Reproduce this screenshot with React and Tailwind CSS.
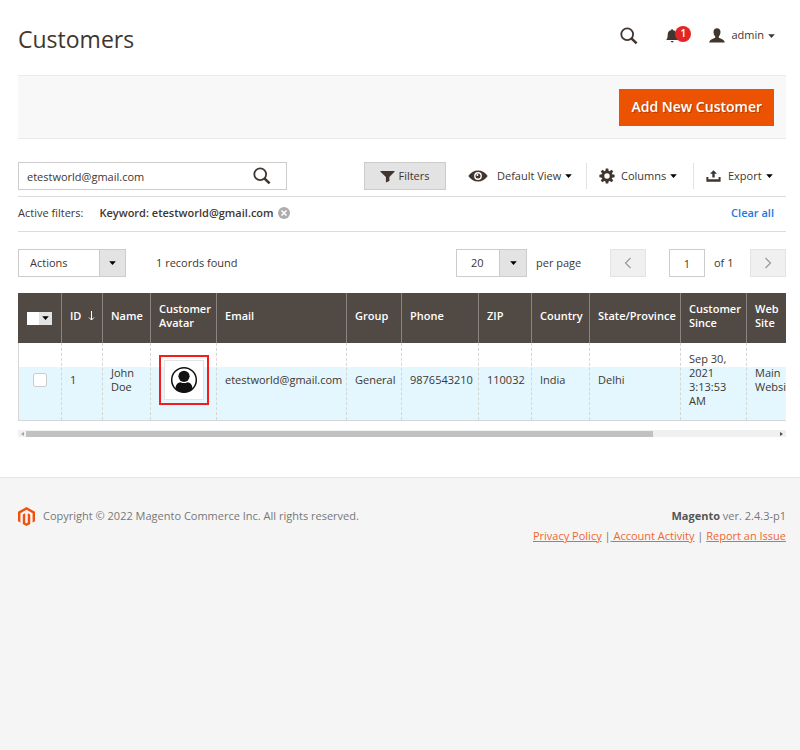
import React from "react";

function Caret({ className = "" }) {
  return (
    <svg className={`shrink-0 ${className}`} width="7" height="4" viewBox="0 0 7 4" aria-hidden="true">
      <path d="M0.200 0.200h6.600L3.500 4z" fill="currentColor" />
    </svg>
  );
}

function SearchIcon({ size }) {
  return (
    <svg width={size} height={size} viewBox="0 0 18 18" fill="none" stroke="#41362f" aria-hidden="true">
      <circle cx="7.2" cy="7.2" r="5.9" strokeWidth="1.8" />
      <path d="M11.4 11.4l5.2 5" strokeWidth="2.6" />
    </svg>
  );
}

function BellIcon() {
  return (
    <svg width="13" height="14" viewBox="0 0 13 14" fill="#41362f" aria-hidden="true">
      <path d="M6 0.3c.7 0 1.100.4 1.100 1 2.400.5 3.400 2.100 3.500 4.100.1 2.600.6 4.200 2.300 5.700H.1c1.500-1.500 1.500-3.100 1.600-5.700C1.800 3.400 2.600 1.800 5 1.300c0-.6.4-1 1-1z" />
      <path d="M4.700 12h3c-.2.9-.8 1.400-1.500 1.400S4.900 12.900 4.700 12z" />
    </svg>
  );
}

function UserIcon() {
  return (
    <svg width="16" height="15" viewBox="0 0 16 15" fill="#41362f" aria-hidden="true">
      <path d="M8 0.300c2.200 0 3.500 1.500 3.500 3.800 0 1.700-.7 3.400-1.700 4.300v1.300c1 .8 5.800 1.500 6 4.800H.2c.2-3.300 5-4 6-4.800V8.400C5.200 7.500 4.500 5.800 4.500 4.100 4.500 1.800 5.800.3 8 .3z" />
    </svg>
  );
}

function FunnelIcon() {
  return (
    <svg width="15" height="13" viewBox="0 0 16 13" fill="#41362f" aria-hidden="true">
      <path d="M0.500 0.500h15v.8L10 7v4.200L6.300 13V7L.5 1.300z" />
    </svg>
  );
}

function EyeIcon() {
  return (
    <svg width="20" height="12" viewBox="0 0 20 12" aria-hidden="true">
      <path d="M0.300 6C2.600 2.500 6 .5 10 .5S17.400 2.500 19.700 6C17.400 9.500 14 11.500 10 11.500S2.600 9.500.3 6z" fill="#41362f" />
      <circle cx="10" cy="6" r="3.900" fill="#fff" />
      <circle cx="10" cy="6" r="2.500" fill="#41362f" />
      <circle cx="9.400" cy="5" r="1" fill="#fff" />
    </svg>
  );
}

function GearIcon() {
  const teeth = [0, 45, 90, 135, 180, 225, 270, 315];
  return (
    <svg width="16" height="16" viewBox="0 0 16 16" aria-hidden="true">
      {teeth.map((angle) => (
        <path key={angle} d="M6.300 3.200L6.800.4h2.400l.5 2.800z" fill="#41362f" transform={`rotate(${angle} 8 8)`} />
      ))}
      <circle cx="8" cy="8" r="4.100" fill="none" stroke="#41362f" strokeWidth="2.800" />
    </svg>
  );
}

function ExportIcon() {
  return (
    <svg width="15" height="12" viewBox="0 0 15 12" fill="#41362f" aria-hidden="true">
      <path d="M7.500 0.200l3.500 3.600H8.700v3.700H6.300V3.800H4z" />
      <path d="M0.400 7h2v2.300h10.200V7h2v4.700H.4z" />
    </svg>
  );
}

function AvatarIcon() {
  return (
    <svg width="28" height="28" viewBox="0 0 28 28" aria-label="Customer avatar" role="img">
      <defs>
        <clipPath id="avatar-ring">
          <circle cx="14" cy="14" r="12.500" />
        </clipPath>
      </defs>
      <circle cx="14" cy="14" r="12.300" fill="#fff" stroke="#111" strokeWidth="1.500" />
      <circle cx="14" cy="10.300" r="5.600" fill="#111" />
      <path d="M5.500 28v-5.500c0-3.500 2.400-6.300 5.200-6.300 1 .6 2.100.9 3.300.9s2.300-.3 3.300-.9c2.800 0 5.200 2.800 5.200 6.300V28z" fill="#111" clipPath="url(#avatar-ring)" />
    </svg>
  );
}

function MagentoLogo() {
  return (
    <svg width="17" height="19" viewBox="0 0 17 19" aria-label="Magento" role="img" fill="#f1500d">
      <path d="M8.500 0L17 4.800v9.500l-2.400 1.300V6.200L8.500 2.700 2.400 6.200v9.400L0 14.300V4.800z" />
      <path d="M4.800 7.500l2.400-1.200v9.300l1.300.8 1.300-.8V6.300l2.400 1.200v9.400L8.500 19l-3.700-2.100z" />
    </svg>
  );
}

function Picker({ label, value, className, textClass, arrowClass }) {
  return (
    <div className={`relative h-7 border border-[#ccc] bg-white ${className}`}>
      <select aria-label={label} defaultValue={value} className={`block h-full w-full appearance-none bg-transparent text-[#41362f] outline-none ${textClass}`}>
        <option>{value}</option>
      </select>
      <span className={`pointer-events-none absolute inset-y-0 right-0 flex items-center justify-center border-l border-[#ccc] bg-[#e3e3e3] text-black ${arrowClass}`}>
        <Caret />
      </span>
    </div>
  );
}

function PageButton({ label, path }) {
  return (
    <button type="button" aria-label={label} className="flex h-7 w-9 items-center justify-center border border-[#e3e3e3] bg-[#f0f0f0]">
      <svg width="8" height="12" viewBox="0 0 8 12" fill="none" stroke="#999" strokeWidth="1.200" aria-hidden="true">
        <path d={path} />
      </svg>
    </button>
  );
}

const columns = [
  { title: "Name", value: "John Doe", width: "w-12" },
  { title: "Customer Avatar", avatar: true, width: "w-[66px]" },
  { title: "Email", value: "etestworld@gmail.com", width: "w-[130px]" },
  { title: "Group", value: "General", width: "w-[55px]" },
  { title: "Phone", value: "9876543210", width: "w-[77px]" },
  { title: "ZIP", value: "110032", width: "w-[53px]" },
  { title: "Country", value: "India", width: "w-[58px]" },
  { title: "State/Province", value: "Delhi", width: "w-[91px]" },
  { title: "Customer Since", value: "Sep 30, 2021 3:13:53 AM", width: "w-[66px]" },
  { title: "Web Site", value: "Main Website", width: "w-[58px]" },
];

function CustomerTable() {
  const head = "border-l border-[#8a837f] px-2 pb-1 text-left font-semibold";
  const cell = "border-l border-dashed border-[#d6d6d6] px-2 pb-1";
  return (
    <div className="mt-4">
      <div className="overflow-hidden border-b border-[#d6d6d6]">
        <table className="w-[745px] min-w-full table-fixed border-separate border-spacing-0 text-[11px] leading-[14px]">
          <colgroup>
            <col className="w-[43px]" />
            <col className="w-[41px]" />
            {columns.map((c) => (
              <col key={c.title} className={c.width} />
            ))}
          </colgroup>
          <thead>
            <tr className="h-[50px] bg-[#514943] text-white">
              <th className="border-l border-[#514943] pl-2 text-left">
                <button type="button" aria-label="Select rows" className="flex h-[13px] w-[25px] bg-white">
                  <span className="ml-auto flex h-full w-[13px] items-center justify-center bg-[#e3e3e3] text-black">
                    <Caret />
                  </span>
                </button>
              </th>
              <th className={head}>
                <span className="flex items-center gap-[7px] whitespace-nowrap">
                  ID
                  <svg className="shrink-0" width="7" height="10" viewBox="0 0 7 10" fill="none" stroke="#fff" aria-hidden="true">
                    <path d="M3.500 0v9M1 6.500l2.500 2.500L6 6.500" />
                  </svg>
                </span>
              </th>
              {columns.map((c) => (
                <th key={c.title} className={head}>{c.title}</th>
              ))}
            </tr>
          </thead>
          <tbody>
            <tr className="h-[77px] bg-linear-to-b from-white from-[24px] to-[#e4f6fe] to-[24px] text-[#41362f]">
              <td className="border-l border-[#d6d6d6] pb-1 pl-[14px]">
                <input type="checkbox" aria-label="Select John Doe" className="block size-[14px] appearance-none rounded-xs border border-[#ccc] bg-white" />
              </td>
              <td className={cell}>1</td>
              {columns.map((c) => (
                <td key={c.title} className={cell}>
                  {c.avatar ? (
                    <div className="flex size-[50px] items-center justify-center border-2 border-[#f51c1c] bg-transparent">
                      <div className="flex size-10 items-center justify-center border border-[#e3e3e3] bg-white">
                        <AvatarIcon />
                      </div>
                    </div>
                  ) : (
                    c.value
                  )}
                </td>
              ))}
            </tr>
          </tbody>
        </table>
      </div>
      <div className="mt-[9px] flex h-[7px] items-center bg-[#f0f0f0] px-[3px]">
        <svg width="3" height="4" viewBox="0 0 3 4" fill="#a3a3a3" aria-hidden="true"><path d="M3 0v4L0 2z" /></svg>
        <div className="mx-[2px] h-[6px] flex-1">
          <div className="h-full w-5/6 bg-[#c1c1c1]" />
        </div>
        <svg width="3" height="4" viewBox="0 0 3 4" fill="#505050" aria-hidden="true"><path d="M0 0v4l3-2z" /></svg>
      </div>
    </div>
  );
}

export default function App() {
  return (
    <div className="flex min-h-screen flex-col bg-white font-['Open_Sans','Noto_Sans',sans-serif] text-[11px] text-[#41362f]">
      <main className="pr-[14px] pl-[18px]">
        <header className="flex h-[75px] items-center justify-between pt-1 pr-[11px]">
          <h1 className="text-[23px] font-normal text-[#41362f]">Customers</h1>
          <div className="flex h-8 items-center pb-2">
            <button type="button" aria-label="Search"><SearchIcon size={18} /></button>
            <button type="button" aria-label="Notifications" className="ml-7 flex items-center">
              <BellIcon />
              <span className="-mt-1 -ml-1 flex size-4 items-center justify-center rounded-full bg-[#e22626] text-[10px] font-semibold text-white">1</span>
            </button>
            <button type="button" className="ml-[18px] flex items-center">
              <UserIcon />
              <span className="mr-1 ml-[6px]">admin</span>
              <Caret />
            </button>
          </div>
        </header>

        <div className="flex h-16 items-center justify-end border-y border-[#ebebeb] bg-[#f8f8f8] pr-3">
          <button type="button" className="h-[37px] bg-[#eb5202] px-3 text-sm font-semibold text-white [text-shadow:1px_1px_0_rgba(0,0,0,0.25)]">
            Add New Customer
          </button>
        </div>

        <div className="mt-[23px] flex h-7 items-center justify-between">
          <div className="flex h-7 w-[269px] items-center border border-[#ccc] pr-[15px]">
            <input type="text" aria-label="Search by keyword" defaultValue="etestworld@gmail.com" className="h-full min-w-0 flex-1 bg-transparent px-2 outline-none" />
            <button type="button" aria-label="Search"><SearchIcon size={18} /></button>
          </div>
          <div className="flex h-7 items-center">
            <button type="button" className="flex h-7 w-[82px] items-center justify-center gap-[3px] border border-[#ccc] bg-[#e3e3e3]">
              <FunnelIcon />
              Filters
            </button>
            <button type="button" className="flex h-[26px] w-[141px] items-center border-r border-[#e3e3e3] pl-[22px]">
              <EyeIcon />
              <span className="mr-1 ml-[9px]">Default View</span>
              <Caret className="text-black" />
            </button>
            <button type="button" className="flex h-[26px] w-[107px] items-center border-r border-[#e3e3e3] pl-3">
              <GearIcon />
              <span className="mr-1 ml-[6px]">Columns</span>
              <Caret className="text-black" />
            </button>
            <button type="button" className="flex h-[26px] w-[92px] items-center pl-3">
              <ExportIcon />
              <span className="mr-1 ml-[7px]">Export</span>
              <Caret className="text-black" />
            </button>
          </div>
        </div>

        <div className="mt-[6px] flex h-9 items-center border-y border-[#dcdcdc] pr-3 pb-[2px]">
          <span>Active filters:</span>
          <span className="ml-4 font-semibold">Keyword: etestworld@gmail.com</span>
          <button type="button" aria-label="Remove keyword filter" className="ml-1 flex size-3 items-center justify-center rounded-full bg-[#adadad]">
            <svg width="6" height="6" viewBox="0 0 6 6" stroke="#fff" strokeWidth="1.500" aria-hidden="true">
              <path d="M.5.5l5 5M5.500.5l-5 5" />
            </svg>
          </button>
          <button type="button" className="ml-auto font-semibold text-[#1979dd]">Clear all</button>
        </div>

        <div className="mt-[17px] flex items-center">
          <Picker label="Actions" value="Actions" className="w-[108px]" textClass="pl-[11px]" arrowClass="w-[26px]" />
          <span className="ml-[30px]">1 records found</span>
          <Picker label="Rows per page" value="20" className="ml-auto w-[71px]" textClass="pl-[14px]" arrowClass="w-[27px]" />
          <span className="ml-[9px] w-[74px]">per page</span>
          <PageButton label="Previous page" path="M6.500 1L1.500 6l5 5" />
          <input type="text" aria-label="Current page" defaultValue="1" className="ml-[23px] h-7 w-9 border border-[#ccc] text-center outline-none" />
          <span className="w-[45px] pl-[9px]">of 1</span>
          <PageButton label="Next page" path="M1.500 1l5 5-5 5" />
        </div>

        <CustomerTable />
      </main>

      <footer className="mt-10 flex flex-1 items-start justify-between border-t border-[#e6e6e6] bg-[#f5f5f5] pt-7 pr-[14px] pl-[18px] leading-5 text-[#777]">
        <div className="flex items-center gap-2">
          <MagentoLogo />
          <span>Copyright © 2022 Magento Commerce Inc. All rights reserved.</span>
        </div>
        <div className="text-right">
          <p><strong className="font-bold text-[#555]">Magento</strong> ver. 2.4.3-p1</p>
          <p>
            <a href="#privacy" className="text-[#ef672f] underline">Privacy Policy</a>
            {" |"}
            <a href="#activity" className="text-[#ef672f] underline">{"\u00a0Account Activity"}</a>
            {" | "}
            <a href="#report" className="text-[#ef672f] underline">Report an Issue</a>
          </p>
        </div>
      </footer>
    </div>
  );
}
